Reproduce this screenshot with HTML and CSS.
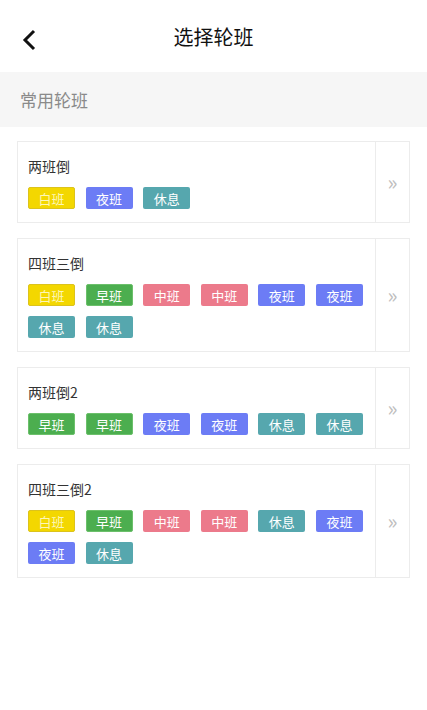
FILE: index.html
```html
<!DOCTYPE html>
<html lang="zh">
<head>
<meta charset="utf-8">
<title>选择轮班</title>
<link rel="stylesheet" href="styles.css">
</head>
<body>
<div class="page">
  <header class="topbar">
    <span class="back">
      <svg width="16" height="22" viewBox="0 0 16 22"><polyline points="12,2 3,11 12,20" fill="none" stroke="#111" stroke-width="3" stroke-linejoin="miter"/></svg>
    </span>
    <h1 class="title">选择轮班</h1>
  </header>
  <div class="section">常用轮班</div>
  <div class="list">
    <div class="card">
      <div class="body">
        <div class="name">两班倒</div>
        <div class="tags">
          <span class="tag y">白班</span><span class="tag b">夜班</span><span class="tag t">休息</span>
        </div>
      </div>
      <div class="more">»</div>
    </div>
    <div class="card">
      <div class="body">
        <div class="name">四班三倒</div>
        <div class="tags">
          <span class="tag y">白班</span><span class="tag g">早班</span><span class="tag p">中班</span><span class="tag p">中班</span><span class="tag b">夜班</span><span class="tag b">夜班</span><span class="tag t">休息</span><span class="tag t">休息</span>
        </div>
      </div>
      <div class="more">»</div>
    </div>
    <div class="card">
      <div class="body">
        <div class="name">两班倒2</div>
        <div class="tags">
          <span class="tag g">早班</span><span class="tag g">早班</span><span class="tag b">夜班</span><span class="tag b">夜班</span><span class="tag t">休息</span><span class="tag t">休息</span>
        </div>
      </div>
      <div class="more">»</div>
    </div>
    <div class="card">
      <div class="body">
        <div class="name">四班三倒2</div>
        <div class="tags">
          <span class="tag y">白班</span><span class="tag g">早班</span><span class="tag p">中班</span><span class="tag p">中班</span><span class="tag t">休息</span><span class="tag b">夜班</span><span class="tag b">夜班</span><span class="tag t">休息</span>
        </div>
      </div>
      <div class="more">»</div>
    </div>
  </div>
</div>
</body>
</html>
```

FILE: styles.css
```css
* { box-sizing: border-box; }
html, body { margin: 0; padding: 0; background: #fff; }
body {
  font-family: "Noto Sans CJK SC", "Noto Sans", sans-serif;
  color: #333;
}
.page { width: 427px; }
.topbar {
  height: 72px;
  display: flex;
  align-items: center;
  justify-content: center;
  position: relative;
}
.back {
  position: absolute;
  left: 22px;
  top: 29px;
  width: 16px;
  height: 22px;
  display: flex;
}
.title {
  margin: 0;
  font-size: 20px;
  font-weight: 400;
  color: #111;
  line-height: 1;
  position: relative;
  top: 1px;
}
.section {
  height: 55px;
  background: #f6f6f6;
  padding-left: 20px;
  display: flex;
  align-items: center;
  font-size: 17px;
  color: #8a8a8a;
}
.list {
  padding: 14px 17px 0 17px;
  display: flex;
  flex-direction: column;
  gap: 15px;
}
.card {
  border: 1px solid #ececec;
  display: flex;
}
.body {
  flex: 1;
  padding: 12px 0 13px 10px;
  border-right: 1px solid #ececec;
}
.name {
  font-size: 14px;
  line-height: 24px;
  color: #333;
  margin-bottom: 9px;
}
.tags {
  display: flex;
  flex-wrap: wrap;
  column-gap: 10.6px;
  row-gap: 10px;
}
.tag {
  width: 47px;
  height: 22px;
  border-radius: 2px;
  color: #fff;
  font-size: 13px;
  display: flex;
  align-items: center;
  justify-content: center;
  line-height: 1;
}
.y { background: #f3d700; border: 1px solid #dcc31c; color: #fdf6b8; }
.g { background: #4cae4f; border: 1px solid #6cc06b; }
.p { background: #ec7a8b; }
.b { background: #6c7cf5; }
.t { background: #56a7ae; }
.more {
  width: 33px;
  display: flex;
  align-items: center;
  justify-content: center;
  font-size: 21px;
  color: #bdbdbd;
  padding-bottom: 3px;
}
```
